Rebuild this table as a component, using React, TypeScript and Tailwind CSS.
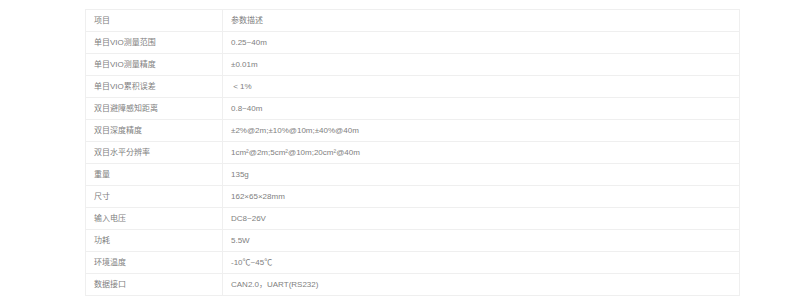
// 产品参数表 — 项目 / 参数描述 两列
import React from 'react';

const rows: [string, string][] = [
  ['项目', '参数描述'],
  ['单目VIO测量范围', '0.25~40m'],
  ['单目VIO测量精度', '±0.01m'],
  ['单目VIO累积误差', '\u00a0< 1%'],
  ['双目避障感知距离', '0.8~40m'],
  ['双目深度精度', '±2%@2m;±10%@10m;±40%@40m'],
  ['双目水平分辨率', '1cm²@2m;5cm²@10m;20cm²@40m'],
  ['重量', '135g'],
  ['尺寸', '162×65×28mm'],
  ['输入电压', 'DC8~26V'],
  ['功耗', '5.5W'],
  ['环境温度', '-10℃~45℃'],
  ['数据接口', 'CAN2.0，UART(RS232)'],
];

export default function App() {
  return (
    <div
      className="w-[800px] h-[300px] bg-white pt-[9px] pl-[85px] overflow-hidden"
      style={{ fontFamily: '"Liberation Sans", "Noto Sans CJK SC", sans-serif' }}
    >
      <div className="w-[655px] border-t border-l border-[#efefef] text-[8px] text-[#808080]">
        {rows.map(([k, v]) => (
          <div key={k} className="flex h-[22px] border-b border-[#efefef]">
            <div className="w-[137px] shrink-0 border-r border-[#efefef] pl-[8px] flex items-center">{k}</div>
            <div className="flex-1 border-r border-[#efefef] pl-[8px] flex items-center">{v}</div>
          </div>
        ))}
      </div>
    </div>
  );
}
